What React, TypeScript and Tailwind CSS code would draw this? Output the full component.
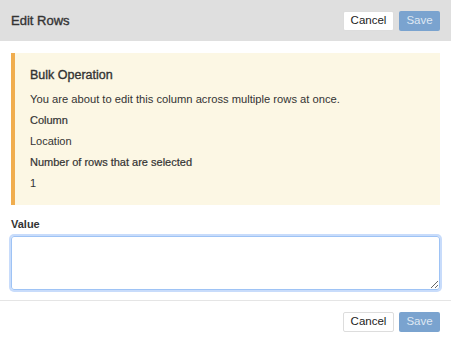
export default function App() {
  const med = "[-webkit-text-stroke:0.35px_currentColor]";
  return (
    <div className="w-[451px] h-[342px] bg-white flex flex-col text-[#333]" style={{ fontFamily: '"Liberation Sans", Arial, sans-serif' }}>
      <div className="h-[41px] shrink-0 bg-[#dfdfdf] flex items-center justify-between pl-[11px] pr-[11px]">
        <div className={`text-[13px] text-[#333] ${med}`}>Edit Rows</div>
        <div className="flex gap-[5px]">
          <button className="h-[20px] w-[51px] bg-white text-[11.5px] text-[#222] border border-[#ddd] rounded-[2px]">Cancel</button>
          <button className="h-[20px] w-[41px] bg-[#7aa3cf] text-[11.5px] text-[#dfe8f3] rounded-[2px]">Save</button>
        </div>
      </div>
      <div className="px-[11px] pt-[12px]">
        <div className="h-[152px] bg-[#fcf7e4] border-l-4 border-[#f0ad4e] pl-[15px] pt-[14px] flex flex-col">
          <div className={`text-[12.5px] leading-[16px] ${med}`}>Bulk Operation</div>
          <div className="text-[11.2px] leading-[14px] mt-[9px]">You are about to edit this column across multiple rows at once.</div>
          <div className="text-[11px] leading-[14px] mt-[7px] [-webkit-text-stroke:0.2px_currentColor]">Column</div>
          <div className="text-[11px] leading-[14px] mt-[7px]">Location</div>
          <div className="text-[11px] leading-[14px] mt-[7px] [-webkit-text-stroke:0.2px_currentColor]">Number of rows that are selected</div>
          <div className="text-[11px] leading-[14px] mt-[7px]">1</div>
        </div>
        <div className="text-[11px] font-bold mt-[12px] leading-[14px]">Value</div>
        <textarea className="mt-[5px] block w-full h-[54px] rounded-[3px] border border-[#9ec3f5] outline-none ring-2 ring-[#c8dcfb] resize-y" />
      </div>
      <div className="mt-[10px] border-t border-[#e5e5e5] flex justify-end gap-[5px] pr-[11px] pt-[11px]">
        <button className="h-[20px] w-[51px] bg-white text-[11.5px] text-[#222] border border-[#ddd] rounded-[2px]">Cancel</button>
        <button className="h-[20px] w-[41px] bg-[#7aa3cf] text-[11.5px] text-[#dfe8f3] rounded-[2px]">Save</button>
      </div>
    </div>
  );
}
